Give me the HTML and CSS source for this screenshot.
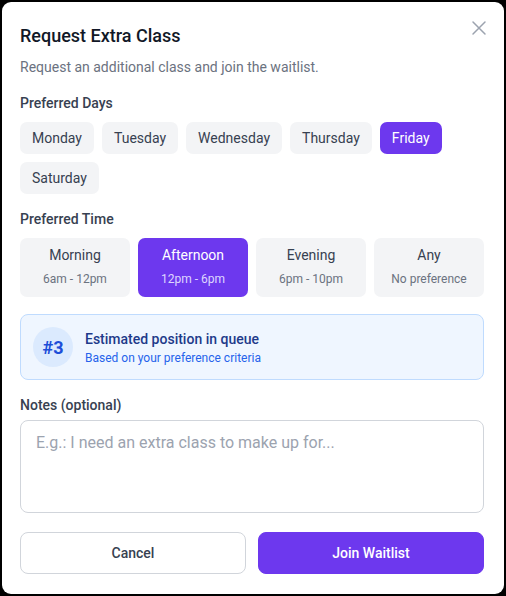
FILE: index.html
```html
<!DOCTYPE html>
<html lang="en">
<head>
<meta charset="utf-8">
<title>Request Extra Class</title>
<link rel="stylesheet" href="styles.css">
</head>
<body>
<div class="dialog">
  <button class="close" aria-label="Close">
    <svg width="24" height="24" viewBox="0 0 24 24" fill="none" stroke="currentColor" stroke-width="1.5" stroke-linecap="round"><path d="M18 6L6 18M6 6l12 12"/></svg>
  </button>
  <h2 class="title">Request Extra Class</h2>
  <p class="subtitle">Request an additional class and join the waitlist.</p>

  <div class="label label-days">Preferred Days</div>
  <div class="days">
    <span class="chip">Monday</span>
    <span class="chip">Tuesday</span>
    <span class="chip">Wednesday</span>
    <span class="chip">Thursday</span>
    <span class="chip chip-active">Friday</span>
    <span class="chip">Saturday</span>
  </div>

  <div class="label label-time">Preferred Time</div>
  <div class="times">
    <div class="time"><div class="time-name">Morning</div><div class="time-range">6am - 12pm</div></div>
    <div class="time time-active"><div class="time-name">Afternoon</div><div class="time-range">12pm - 6pm</div></div>
    <div class="time"><div class="time-name">Evening</div><div class="time-range">6pm - 10pm</div></div>
    <div class="time"><div class="time-name">Any</div><div class="time-range">No preference</div></div>
  </div>

  <div class="queue">
    <div class="queue-badge">#3</div>
    <div class="queue-text">
      <div class="queue-title">Estimated position in queue</div>
      <div class="queue-sub">Based on your preference criteria</div>
    </div>
  </div>

  <label class="label label-notes" for="notes">Notes (optional)</label>
  <textarea id="notes" class="notes" placeholder="E.g.: I need an extra class to make up for..."></textarea>

  <div class="actions">
    <button class="btn btn-cancel">Cancel</button>
    <button class="btn btn-primary">Join Waitlist</button>
  </div>
</div>
</body>
</html>
```
FILE: styles.css
```css
* { box-sizing: border-box; }
html, body { margin: 0; }
body {
  background: #000;
  padding: 2px;
  font-family: Roboto, "Noto Sans", sans-serif;
  color: #374151;
}
.dialog {
  position: relative;
  background: #fff;
  border-radius: 9px;
  padding: 20px 20px 19px 18px;
  min-height: 592px;
}
.close {
  position: absolute;
  top: 14px;
  right: 13px;
  width: 24px;
  height: 24px;
  padding: 0;
  border: 0;
  background: none;
  color: #9ca3af;
  display: flex;
}
.title {
  margin: 0;
  font-size: 18px;
  line-height: 28px;
  font-weight: 500;
  color: #111827;
}
.subtitle {
  margin: 7px 0 0;
  font-size: 14px;
  line-height: 20px;
  color: #6b7280;
}
.label {
  display: block;
  font-size: 14px;
  line-height: 20px;
  font-weight: 500;
  color: #374151;
}
.label-days { margin-top: 16px; margin-bottom: 9px; }
.label-time { margin-top: 15px; margin-bottom: 9px; }
.label-notes { margin-top: 15px; margin-bottom: 5px; }
.days {
  display: flex;
  flex-wrap: wrap;
  gap: 8px;
}
.chip {
  display: inline-flex;
  align-items: center;
  height: 32px;
  padding: 0 12px;
  border-radius: 7px;
  background: #f3f4f6;
  font-size: 14px;
  color: #374151;
}
.chip-active {
  background: #6d38ee;
  color: #fff;
}
.times {
  display: grid;
  grid-template-columns: repeat(4, 1fr);
  gap: 8px;
}
.time {
  background: #f3f4f6;
  border-radius: 7px;
  padding: 7px 6px 10px;
  text-align: center;
}
.time-name {
  font-size: 14px;
  line-height: 20px;
  font-weight: 400;
  color: #374151;
}
.time-range {
  margin-top: 6px;
  font-size: 12px;
  line-height: 16px;
  color: #6b7280;
}
.time-active { background: #6d38ee; }
.time-active .time-name { color: #fff; }
.time-active .time-range { color: #ddd6fe; }
.queue {
  margin-top: 17px;
  display: flex;
  align-items: center;
  gap: 12px;
  padding: 12px;
  background: #eff6ff;
  border: 1px solid #bfdbfe;
  border-radius: 8px;
}
.queue-badge {
  width: 40px;
  height: 40px;
  border-radius: 50%;
  background: #dbeafe;
  color: #1d4ed8;
  font-size: 18px;
  font-weight: 700;
  display: flex;
  align-items: center;
  justify-content: center;
  flex-shrink: 0;
}
.queue-title {
  font-size: 14px;
  line-height: 20px;
  font-weight: 500;
  color: #1e3a8a;
}
.queue-sub {
  margin-top: 1px;
  font-size: 12px;
  line-height: 16px;
  color: #2563eb;
}
.notes {
  display: block;
  width: 100%;
  height: 93px;
  resize: none;
  border: 1px solid #d1d5db;
  border-radius: 8px;
  padding: 10px 15px;
  font-family: Roboto, "Noto Sans", sans-serif;
  font-size: 16px;
  line-height: 24px;
  color: #111827;
  background: #fff;
}
.notes::placeholder { color: #9ca3af; }
.actions {
  margin-top: 19px;
  display: flex;
  gap: 12px;
}
.btn {
  flex: 1;
  height: 42px;
  border-radius: 8px;
  font-family: Roboto, "Noto Sans", sans-serif;
  font-size: 14px;
  font-weight: 500;
  cursor: pointer;
}
.btn-cancel {
  background: #fff;
  border: 1px solid #d1d5db;
  color: #374151;
}
.btn-primary {
  background: #6d38ee;
  border: 1px solid #6d38ee;
  color: #fff;
}
```
